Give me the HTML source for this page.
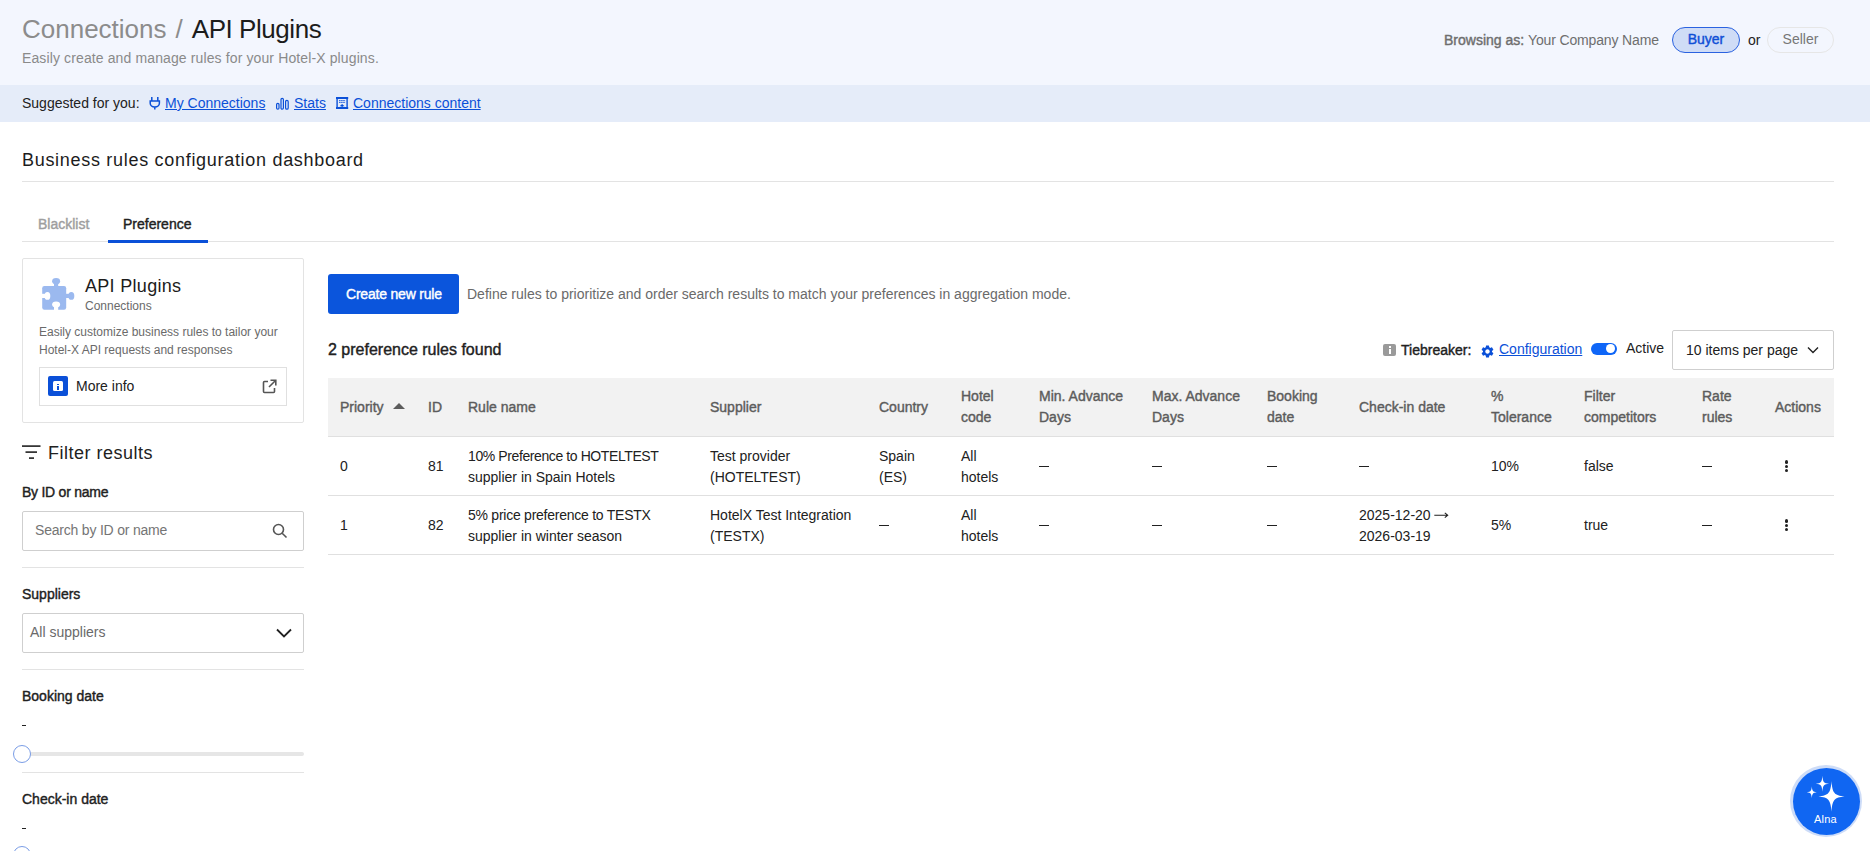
<!DOCTYPE html>
<html><head><meta charset="utf-8">
<style>
*{box-sizing:border-box;margin:0;padding:0}
html,body{width:1870px;height:851px;overflow:hidden;background:#fff;font-family:"Liberation Sans",sans-serif;color:#212121}
.a{position:absolute;white-space:nowrap;line-height:1}
.hdr{position:absolute;left:0;top:0;width:1870px;height:85px;background:#f3f6fe}
.sug{position:absolute;left:0;top:85px;width:1870px;height:37px;background:#e5ecf9}
.lnk{color:#0b50d8;text-decoration:underline;text-underline-offset:1px}
.hr{position:absolute;background:#e3e3e3;height:1px}
.bold{font-weight:bold}
.med{font-weight:normal;-webkit-text-stroke:0.4px currentColor}

.tb{position:absolute;left:328px;top:378px;width:1506px;border-collapse:collapse;table-layout:fixed;font-size:14px;line-height:21px}
.tb th{background:#f2f2f2;color:#5c5c5c;font-weight:normal;-webkit-text-stroke:0.4px #5c5c5c;text-align:left;padding:1px 0 0 12px;height:58px;vertical-align:middle;letter-spacing:0px;white-space:nowrap;border-bottom:1px solid #e0e0e0}
.tb td{padding:2px 0 0 12px;height:59px;vertical-align:middle;white-space:nowrap;color:#212121;border-bottom:1px solid #e0e0e0}
.tri{display:inline-block;width:0;height:0;border-left:6px solid transparent;border-right:6px solid transparent;border-bottom:6px solid #5c5c5c;margin-left:6px;vertical-align:3px}
.dash{display:inline-block;width:10px;height:1px;background:#212121;vertical-align:4px}
.kb{display:inline-block;width:4px;margin-left:9.5px;vertical-align:middle;position:relative;top:-1px}
.kb b{display:block;width:3.6px;height:3.6px;border-radius:50%;background:#212121;margin:0.6px 0}
</style></head><body>
<div class="hdr"></div>
<div class="sug"></div>

<!-- header title -->
<div class="a" style="left:22px;top:16px;font-size:26px;color:#8c8c8c">Connections<span style="margin-left:9px">/</span><span style="color:#1c1c1c;margin-left:9px;letter-spacing:-0.45px">API Plugins</span></div>
<div class="a" style="left:22px;top:51px;font-size:14px;letter-spacing:0.12px;color:#8a8a8a">Easily create and manage rules for your Hotel-X plugins.</div>

<div class="a" style="left:1444px;top:33px;font-size:14px;color:#6e6e6e"><span class="med">Browsing as:</span> <span style="letter-spacing:-0.15px">Your Company Name</span></div>
<div class="a" style="left:1672px;top:27px;width:68px;height:26px;border:1px solid #2a62e0;border-radius:13px;background:#cfdcf6;color:#0f4fd6;font-size:14px;-webkit-text-stroke:0.4px #0f4fd6;text-align:center;line-height:23px">Buyer</div>
<div class="a" style="left:1748px;top:33px;font-size:14px;color:#212121">or</div>
<div class="a" style="left:1767px;top:27px;width:67px;height:26px;border:1px solid #e6e6e6;border-radius:13px;color:#777;font-size:14px;text-align:center;line-height:23px">Seller</div>

<!-- suggested -->
<div class="a" style="left:22px;top:96px;font-size:14px;color:#212121">Suggested for you:</div>
<div class="a lnk" style="left:165px;top:96px;font-size:14px">My Connections</div>
<div class="a lnk" style="left:294px;top:96px;font-size:14px">Stats</div>
<div class="a lnk" style="left:353px;top:96px;font-size:14px">Connections content</div>


<svg class="a" style="left:149px;top:97px" width="12" height="13" viewBox="0 0 12 13" fill="none" stroke="#0b50d8" stroke-width="1.5"><path d="M2.8 0v3.6M8.8 0v3.6M1.2 4H10.4V6.2C10.4 8.4 8.4 10 5.8 10S1.2 8.4 1.2 6.2Z M5.8 10v2.6"/></svg>
<svg class="a" style="left:275px;top:97px" width="15" height="13" viewBox="0 0 15 13" fill="none" stroke="#0b50d8" stroke-width="1.2"><rect x="1.6" y="6.4" width="2.4" height="5.8" rx="1.2"/><rect x="6" y="1.4" width="2.4" height="10.8" rx="1.2"/><rect x="10.6" y="3.4" width="2.6" height="8.8" rx="1.3"/></svg>
<svg class="a" style="left:336px;top:97px" width="13" height="13" viewBox="0 0 13 13"><g fill="#0b50d8"><rect x="0" y="0" width="12.2" height="2"/><rect x="0.4" y="0" width="1.4" height="12"/><rect x="10.4" y="0" width="1.4" height="12"/><rect x="0" y="10" width="12.2" height="2"/><path d="M3.6 9.2L6.1 6.9 8.6 9.2z"/><rect x="5.5" y="8.6" width="1.2" height="2"/></g><path d="M3 3.6h6.4M3 5.4h6.4" stroke="#0b50d8" stroke-width="0.9" stroke-dasharray="1.6 0.5"/></svg>
<!-- dashboard title -->
<div class="a" style="left:22px;top:151px;font-size:18px;letter-spacing:0.7px;color:#1c1c1c">Business rules configuration dashboard</div>
<div class="hr" style="left:22px;top:181px;width:1812px"></div>

<!-- tabs -->
<div class="a med" style="left:38px;top:217px;font-size:14px;color:#9e9e9e">Blacklist</div>
<div class="a med" style="left:123px;top:217px;font-size:14px;color:#212121">Preference</div>
<div class="hr" style="left:22px;top:241px;width:1812px"></div>
<div class="a" style="left:108px;top:240px;width:100px;height:3px;background:#0b50d8"></div>


<!-- card -->
<div class="a" style="left:22px;top:258px;width:282px;height:165px;border:1px solid #e3e3e3;border-radius:2px"></div>
<svg class="a" style="left:38px;top:274px" width="40" height="40" viewBox="0 0 40 40"><defs><mask id="pm"><rect width="40" height="40" fill="#fff"/><ellipse cx="9.4" cy="21.9" rx="2.9" ry="3.9" fill="#000"/><rect x="3" y="19.8" width="6" height="4.2" fill="#000"/><ellipse cx="18.1" cy="30.6" rx="4" ry="3" fill="#000"/><rect x="16" y="31" width="4.2" height="6" fill="#000"/></mask></defs><g fill="#9bb9ef"><g mask="url(#pm)"><rect x="4.2" y="12" width="24" height="23.8" rx="2.2"/></g><ellipse cx="18.1" cy="7.2" rx="4" ry="3.1"/><rect x="16" y="8" width="4.2" height="5"/><ellipse cx="33.3" cy="21.9" rx="3" ry="3.9"/><rect x="27" y="19.8" width="6" height="4.2"/></g></svg>
<div class="a" style="left:85px;top:277px;font-size:18px;letter-spacing:0.3px;color:#1c1c1c">API Plugins</div>
<div class="a" style="left:85px;top:300px;font-size:12px;color:#6a6a6a">Connections</div>
<div class="a" style="left:39px;top:323px;font-size:12px;line-height:18px;color:#6a6a6a;white-space:normal;width:250px">Easily customize business rules to tailor your<br>Hotel-X API requests and responses</div>
<div class="a" style="left:39px;top:367px;width:248px;height:39px;border:1px solid #e0e0e0"></div>
<div class="a" style="left:48px;top:376px;width:20px;height:20px;background:#0b50d8;border-radius:2px"></div>
<div class="a" style="left:53px;top:381px;width:10px;height:10px;background:#fff;border-radius:1.5px"></div>
<div class="a" style="left:57.3px;top:383.5px;width:1.6px;height:1.6px;background:#0b50d8"></div>
<div class="a" style="left:57.3px;top:386px;width:1.6px;height:3.5px;background:#0b50d8"></div>
<div class="a" style="left:76px;top:379px;font-size:14px;color:#212121">More info</div>
<svg class="a" style="left:262px;top:379px" width="15" height="15" viewBox="0 0 15 15" fill="none" stroke="#555" stroke-width="1.6"><path d="M6 2.5H2.5a1 1 0 0 0-1 1v9a1 1 0 0 0 1 1h9a1 1 0 0 0 1-1V9"/><path d="M8.5 1.2h5.3v5.3M13.8 1.2L7 8"/></svg>

<!-- filter -->
<svg class="a" style="left:22px;top:445px" width="19" height="15" viewBox="0 0 19 15" fill="#212121"><rect x="0" y="0.3" width="18.5" height="1.6"/><rect x="3.5" y="6.3" width="11.5" height="1.6"/><rect x="7" y="12.3" width="5" height="1.6"/></svg>
<div class="a" style="left:48px;top:444px;font-size:18px;letter-spacing:0.5px;color:#212121">Filter results</div>
<div class="a med" style="left:22px;top:485px;font-size:14px;letter-spacing:-0.25px;color:#212121">By ID or name</div>
<div class="a" style="left:22px;top:511px;width:282px;height:40px;border:1px solid #cfcfcf;border-radius:2px"></div>
<div class="a" style="left:35px;top:523px;font-size:14px;letter-spacing:-0.2px;color:#757575">Search by ID or name</div>
<svg class="a" style="left:272px;top:523px" width="16" height="16" viewBox="0 0 16 16" fill="none" stroke="#555" stroke-width="1.6"><circle cx="6.5" cy="6.5" r="5"/><path d="M10.2 10.2l4.3 4.3"/></svg>
<div class="hr" style="left:22px;top:567px;width:282px"></div>

<div class="a med" style="left:22px;top:587px;font-size:14px;color:#212121">Suppliers</div>
<div class="a" style="left:22px;top:613px;width:282px;height:40px;border:1px solid #cfcfcf;border-radius:2px"></div>
<div class="a" style="left:30px;top:625px;font-size:14px;letter-spacing:0px;color:#6a6a6a">All suppliers</div>
<svg class="a" style="left:276px;top:628px" width="16" height="10" viewBox="0 0 16 10" fill="none" stroke="#212121" stroke-width="1.8"><path d="M1 1.5l7 7 7-7"/></svg>
<div class="hr" style="left:22px;top:669px;width:282px"></div>

<div class="a med" style="left:22px;top:689px;font-size:14px;color:#212121">Booking date</div>
<div class="a" style="left:22px;top:725px;width:4px;height:1.2px;background:#212121"></div>
<div class="a" style="left:22px;top:752px;width:282px;height:4px;background:#e6e6e6;border-radius:2px"></div>
<div class="a" style="left:13px;top:745px;width:18px;height:18px;border:1.5px solid #7a9de6;border-radius:50%;background:#fff"></div>
<div class="hr" style="left:22px;top:772px;width:282px"></div>

<div class="a med" style="left:22px;top:792px;font-size:14px;color:#212121">Check-in date</div>
<div class="a" style="left:22px;top:828px;width:4px;height:1.2px;background:#212121"></div>
<div class="a" style="left:13px;top:846px;width:18px;height:18px;border:1.5px solid #7a9de6;border-radius:50%;background:#fff"></div>

<!-- main toolbar -->
<div class="a" style="left:328px;top:274px;width:131px;height:40px;background:#0b55dc;border-radius:3px"></div>
<div class="a med" style="left:346px;top:287px;font-size:14px;letter-spacing:-0.2px;color:#fff">Create new rule</div>
<div class="a" style="left:467px;top:287px;font-size:14px;color:#6a6a6a">Define rules to prioritize and order search results to match your preferences in aggregation mode.</div>
<div class="a med" style="left:328px;top:342px;font-size:16px;color:#212121">2 preference rules found</div>

<div class="a" style="left:1383px;top:344px;width:13px;height:12px;background:#9a9a9a;border-radius:2px"></div><div class="a" style="left:1388.5px;top:346px;width:2px;height:1.6px;background:#fff"></div><div class="a" style="left:1388.5px;top:348.5px;width:2px;height:5px;background:#fff"></div>
<div class="a med" style="left:1401px;top:343px;font-size:14px;color:#212121">Tiebreaker:</div>
<svg class="a" style="left:1480px;top:344px" width="15" height="15" viewBox="0 0 24 24"><path fill="#0b50d8" d="M19.14 12.94c.04-.3.06-.61.06-.94 0-.32-.02-.64-.07-.94l2.03-1.58a.49.49 0 0 0 .12-.61l-1.92-3.32a.488.488 0 0 0-.59-.22l-2.39.96c-.5-.38-1.03-.7-1.62-.94l-.36-2.54a.484.484 0 0 0-.48-.41h-3.84c-.24 0-.43.17-.47.41l-.36 2.54c-.59.24-1.13.57-1.62.94l-2.39-.96c-.22-.08-.47 0-.59.22L2.74 8.87c-.12.21-.08.47.12.61l2.03 1.58c-.05.3-.09.63-.09.94s.02.64.07.94l-2.03 1.58a.49.49 0 0 0-.12.61l1.92 3.32c.12.22.37.29.59.22l2.39-.96c.5.38 1.03.7 1.62.94l.36 2.54c.05.24.24.41.48.41h3.84c.24 0 .44-.17.47-.41l.36-2.54c.59-.24 1.13-.56 1.62-.94l2.39.96c.22.08.47 0 .59-.22l1.92-3.32c.12-.22.07-.47-.12-.61l-2.01-1.58zM12 15.6c-1.98 0-3.6-1.62-3.6-3.6s1.62-3.6 3.6-3.6 3.6 1.62 3.6 3.6-1.62 3.6-3.6 3.6z"/></svg>
<div class="a lnk" style="left:1499px;top:342px;font-size:14px">Configuration</div>
<div class="a" style="left:1591px;top:342.5px;width:26px;height:12.5px;background:#0f66f7;border-radius:7px"></div>
<div class="a" style="left:1606.4px;top:344.4px;width:8.8px;height:8.8px;background:#fff;border-radius:50%"></div>
<div class="a" style="left:1626px;top:341px;font-size:14px;color:#212121">Active</div>
<div class="a" style="left:1672px;top:330px;width:162px;height:40px;border:1px solid #cfcfcf;border-radius:2px"></div>
<div class="a" style="left:1686px;top:343px;font-size:14px;color:#212121">10 items per page</div>
<svg class="a" style="left:1807px;top:346px" width="12" height="8" viewBox="0 0 12 8" fill="none" stroke="#212121" stroke-width="1.4"><path d="M1 1.5l5 5 5-5"/></svg>

<!-- table -->
<table class="tb">
<colgroup><col style="width:88px"><col style="width:40px"><col style="width:242px"><col style="width:169px"><col style="width:82px"><col style="width:78px"><col style="width:113px"><col style="width:115px"><col style="width:92px"><col style="width:132px"><col style="width:93px"><col style="width:118px"><col style="width:73px"><col style="width:71px"></colgroup>
<thead><tr>
<th>Priority <span class="tri"></span></th><th>ID</th><th>Rule name</th><th>Supplier</th><th>Country</th><th>Hotel<br>code</th><th>Min. Advance<br>Days</th><th>Max. Advance<br>Days</th><th>Booking<br>date</th><th>Check-in date</th><th>%<br>Tolerance</th><th>Filter<br>competitors</th><th>Rate<br>rules</th><th>Actions</th>
</tr></thead>
<tbody>
<tr><td>0</td><td>81</td><td><span style="letter-spacing:-0.4px">10% Preference to HOTELTEST</span><br>supplier in Spain Hotels</td><td>Test provider<br>(HOTELTEST)</td><td>Spain<br>(ES)</td><td>All<br>hotels</td><td><i class="dash"></i></td><td><i class="dash"></i></td><td><i class="dash"></i></td><td><i class="dash"></i></td><td>10%</td><td>false</td><td><i class="dash"></i></td><td><span class="kb"><b></b><b></b><b></b></span></td></tr>
<tr><td>1</td><td>82</td><td><span style="letter-spacing:-0.25px">5% price preference to TESTX</span><br>supplier in winter season</td><td>HotelX Test Integration<br>(TESTX)</td><td><i class="dash"></i></td><td>All<br>hotels</td><td><i class="dash"></i></td><td><i class="dash"></i></td><td><i class="dash"></i></td><td>2025-12-20 <svg width="15" height="10" viewBox="0 0 15 10" style="vertical-align:0px;margin-left:-1px"><path d="M0.3 5.2h13.4M10.8 2.8l2.9 2.4-2.9 2.4" fill="none" stroke="#212121" stroke-width="1.1"/></svg><br>2026-03-19</td><td>5%</td><td>true</td><td><i class="dash"></i></td><td><span class="kb"><b></b><b></b><b></b></span></td></tr>
</tbody></table>

<!-- Alna -->
<div class="a" style="left:1790px;top:765px;width:72px;height:72px;border-radius:50%;background:#cddcf8"></div>
<div class="a" style="left:1792.5px;top:767.5px;width:67px;height:67px;border-radius:50%;background:#1066f2"></div>
<svg class="a" style="left:1790px;top:765px" width="72" height="72" viewBox="0 0 72 72" fill="#fff">
<path transform="translate(41.5,31.4) scale(13,15.4)" d="M0,-1C0.06,-0.22 0.22,-0.06 1,0C0.22,0.06 0.06,0.22 0,1C-0.06,0.22 -0.22,0.06 -1,0C-0.22,-0.06 -0.06,-0.22 0,-1Z"/>
<path transform="translate(32.4,18.7) scale(6.7,8)" d="M0,-1C0.06,-0.22 0.22,-0.06 1,0C0.22,0.06 0.06,0.22 0,1C-0.06,0.22 -0.22,0.06 -1,0C-0.22,-0.06 -0.06,-0.22 0,-1Z"/>
<path transform="translate(21.8,27.2) scale(5,6)" d="M0,-1C0.06,-0.22 0.22,-0.06 1,0C0.22,0.06 0.06,0.22 0,1C-0.06,0.22 -0.22,0.06 -1,0C-0.22,-0.06 -0.06,-0.22 0,-1Z"/>
</svg>
<div class="a" style="left:1814px;top:813.5px;font-size:11px;letter-spacing:0.2px;color:#fff">Alna</div>
</body></html>
